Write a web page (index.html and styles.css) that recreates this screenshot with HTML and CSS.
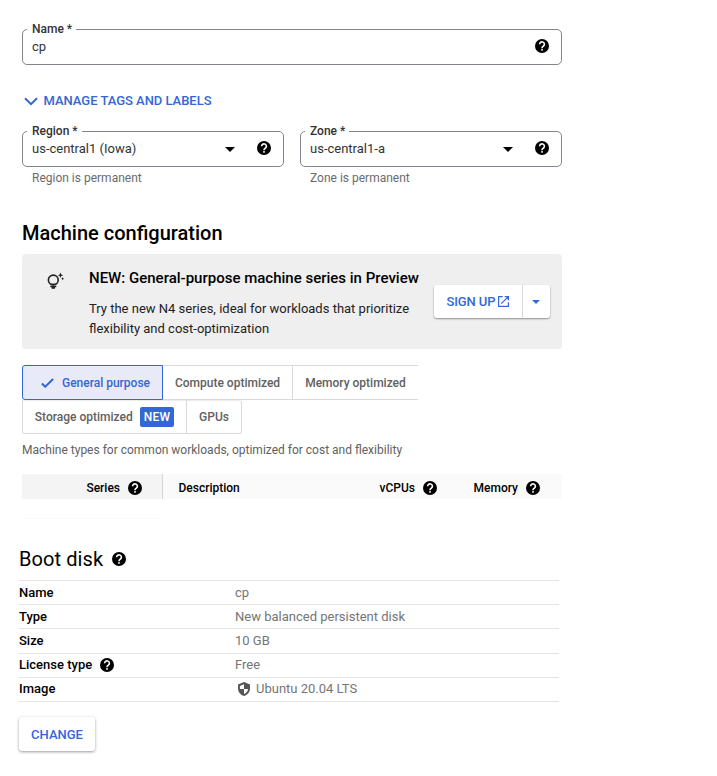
FILE: index.html
```html
<!DOCTYPE html>
<html lang="en">
<head>
<meta charset="utf-8">
<title>Create an instance</title>
<link rel="stylesheet" href="styles.css">
</head>
<body>
<svg class="defs" aria-hidden="true">
  <symbol id="help" viewBox="0 0 14 14">
    <circle cx="7" cy="7" r="7" fill="#000"/>
    <path d="M4.600 5.300a2.400 2.400 0 1 1 3.800 1.900C7.500 7.900 7 8.100 7 9.200" fill="none" stroke="#fff" stroke-width="1.600"/>
    <rect x="6.200" y="10.100" width="1.600" height="1.600" fill="#fff"/>
  </symbol>
</svg>
<main class="page">
  <div class="field">
    <span class="field-label">Name *</span>
    <span class="field-value">cp</span>
    <svg class="help"><use href="#help"/></svg>
  </div>

  <a class="expander">
    <svg class="chevron" viewBox="0 0 14 9"><path d="M1 1.200l6 6 6-6" fill="none" stroke="#3367d6" stroke-width="2"/></svg>
    <span>MANAGE TAGS AND LABELS</span>
  </a>

  <div class="location">
    <div class="location-col">
      <div class="field">
        <span class="field-label">Region *</span>
        <span class="field-value">us-central1 (Iowa)</span>
        <span class="caret"></span>
        <svg class="help"><use href="#help"/></svg>
      </div>
      <p class="hint">Region is permanent</p>
    </div>
    <div class="location-col">
      <div class="field">
        <span class="field-label">Zone *</span>
        <span class="field-value">us-central1-a</span>
        <span class="caret"></span>
        <svg class="help"><use href="#help"/></svg>
      </div>
      <p class="hint">Zone is permanent</p>
    </div>
  </div>

  <h2 class="section-title">Machine configuration</h2>

  <section class="banner">
    <svg class="bulb" viewBox="0 0 18 18">
      <circle cx="6.300" cy="8" r="4.900" fill="none" stroke="#222" stroke-width="1.600"/>
      <path d="M3.300 11.600h6v1.700h-6z" fill="#222"/>
      <path d="M3.300 14h6v1.300H8v1.500H4.600v-1.500H3.300z" fill="#222"/>
      <path d="M13.500.5l.8 1.900 1.900.8-1.900.8-.8 1.900-.8-1.900-1.900-.8 1.900-.8z" fill="#222"/>
      <path d="M15.700 5.200l.5 1 1 .5-1 .5-.5 1-.5-1-1-.5 1-.5z" fill="#222"/>
    </svg>
    <div class="banner-body">
      <h3 class="banner-title">NEW: General-purpose machine series in Preview</h3>
      <p class="banner-text">Try the new N4 series, ideal for workloads that prioritize<br>flexibility and cost-optimization</p>
    </div>
    <div class="split-button">
      <span class="split-main">SIGN UP
        <svg class="launch" viewBox="0 0 11 11"><path d="M4.700.6H.6v9.800h9.800V6.200M6.700.6h3.700v3.700M10.200.8L3.300 7.700" fill="none" stroke="#3367d6" stroke-width="1.200"/></svg>
      </span>
      <span class="split-arrow"><span class="caret caret-blue"></span></span>
    </div>
  </section>

  <div class="tabs">
    <div class="tab-row tab-row-first">
      <span class="tab tab-active">
        <svg class="check" viewBox="0 0 12 9"><path d="M.8 4.900l3.100 3L11.200.8" fill="none" stroke="#3367d6" stroke-width="1.900"/></svg>
        <span>General purpose</span>
      </span>
      <span class="tab tab-compute">Compute optimized</span>
      <span class="tab tab-memory">Memory optimized</span>
    </div>
    <div class="tab-row tab-row-second">
      <span class="tab tab-storage">Storage optimized <b class="badge">NEW</b></span>
      <span class="tab tab-gpu">GPUs</span>
    </div>
  </div>
  <p class="note">Machine types for common workloads, optimized for cost and flexibility</p>

  <div class="series-head">
    <span class="col col-series"><span>Series</span><svg class="help"><use href="#help"/></svg></span>
    <span class="col col-desc">Description</span>
    <span class="col col-cpu"><span>vCPUs</span><svg class="help"><use href="#help"/></svg></span>
    <span class="col col-mem"><span>Memory</span><svg class="help"><use href="#help"/></svg></span>
  </div>
  <div class="series-edge"></div>

  <section class="boot">
    <h2 class="boot-title"><span>Boot disk</span><svg class="help"><use href="#help"/></svg></h2>
    <dl class="details">
      <div class="row"><dt>Name</dt><dd>cp</dd></div>
      <div class="row"><dt>Type</dt><dd>New balanced persistent disk</dd></div>
      <div class="row"><dt>Size</dt><dd>10 GB</dd></div>
      <div class="row"><dt>License type<svg class="help"><use href="#help"/></svg></dt><dd>Free</dd></div>
      <div class="row"><dt>Image</dt><dd>
        <svg class="shield" viewBox="0 0 12 14"><path d="M6 0L0 2.400v4C0 9.800 2.500 12.900 6 14c3.500-1.100 6-4.200 6-7.600v-4z" fill="#555"/><path d="M6 2.300V7H1.900V3.900zM6 7h4.100C9.800 9.300 8.300 11.200 6 12z" fill="#fff"/></svg>Ubuntu 20.04 LTS</dd></div>
    </dl>
    <button class="change">CHANGE</button>
  </section>
</main>
</body>
</html>
```
FILE: styles.css
```css
* { box-sizing: border-box; }
body {
  margin: 0;
  background: #fff;
  color: #000;
  font: 13px/20px Roboto, "Liberation Sans", sans-serif;
}
h2, h3, p, dl, dd { margin: 0; }
svg { flex: none; display: block; }
.defs { position: absolute; width: 0; height: 0; }
.page { width: 540px; margin-left: 22px; padding: 29px 0 20px; }
.help { width: 14px; height: 14px; }

.field {
  position: relative;
  display: flex;
  align-items: center;
  height: 36px;
  padding: 0 12px 2px 9px;
  border: 1px solid #80868b;
  border-radius: 5px;
}
.field-label {
  position: absolute;
  top: -9px;
  left: 4px;
  padding: 0 4px 0 5px;
  background: #fff;
  color: #333;
  font-size: 12px;
  font-weight: 500;
  line-height: 16px;
}
.field-value { flex: 1; padding-top: 2px; color: #333; }
.caret {
  width: 0;
  height: 0;
  margin-right: 22px;
  border: 5px solid transparent;
  border-top-color: #000;
  border-bottom: 0;
}
.field .caret { margin-top: 2px; }
.expander {
  display: flex;
  align-items: center;
  gap: 5.5px;
  height: 20px;
  margin-top: 26px;
  padding-left: 2px;
  color: #3367d6;
  font-weight: 500;
  letter-spacing: -.03px;
}
.chevron { width: 14px; height: 9px; }
.location { display: flex; gap: 16px; margin-top: 20px; }
.location-col { width: 262px; }
.hint {
  padding: 3px 0 0 10px;
  line-height: 16px;
  color: #6b6b6b;
  font-size: 12px;
}

.section-title { padding-top: 35px; font-size: 20px; font-weight: 500; line-height: 24px; }
.banner {
  display: flex;
  height: 95px;
  margin-top: 9px;
  padding-right: 12.5px;
  border-radius: 4px;
  background: #efefef;
}
.bulb { width: 18px; height: 18px; margin: 18px 24px 0 25px; }
.banner-body { flex: 1; padding-top: 14px; white-space: nowrap; }
.banner-title { font-size: 15px; font-weight: 500; line-height: 20px; }
.banner-text { margin-top: 11px; color: #222; }
.split-button {
  display: flex;
  height: 33px;
  margin-top: 31px;
  border-radius: 3px;
  background: #fff;
  box-shadow: 0 1px 2px rgba(0,0,0,.4);
  color: #3367d6;
  font-weight: 500;
}
.split-main { display: flex; align-items: center; gap: 3px; width: 89px; padding-left: 13px; white-space: nowrap; letter-spacing: -.1px; border-right: 1px solid #dadada; }
.launch { width: 11px; height: 11px; }
.split-arrow { display: flex; align-items: center; justify-content: center; width: 27px; }
.caret-blue { margin: 0; border-width: 4px; border-top-color: #3367d6; border-bottom: 0; }

.tabs { margin-top: 16px; color: #616161; font-size: 12px; font-weight: 500; }
.tab-row { display: flex; height: 34px; }
.tab-row-first { height: 35px; width: 396px; }
.tab { display: flex; align-items: center; justify-content: center; border: 1px solid #dadada; border-left: 0; white-space: nowrap; }
.tab-active { gap: 8px; width: 141px; padding-left: 6px; border: 1px solid #3367d6; border-radius: 3px 0 0 3px; background: #e9eaf8; color: #3367d6; }
.check { width: 13px; height: 10px; }
.tab-compute { width: 130px; }
.tab-memory { width: 125px; border-right: 0; }
.tab-storage { gap: 7px; width: 165px; border-left: 1px solid #dadada; border-top-color: #ececec; border-radius: 0 0 0 3px; }
.tab-gpu { width: 55px; border-top-color: #ececec; border-radius: 0 3px 3px 0; }
.badge { height: 20px; padding: 0 4px; border-radius: 2px; background: #3367d6; color: #fff; font-weight: 500; letter-spacing: .2px; }
.note { margin-top: 6px; color: #616161; font-size: 12px; }

.series-head { display: flex; height: 25px; margin-top: 14px; background: #fafafa; font-size: 12px; font-weight: 500; }
.col { display: flex; align-items: center; gap: 8px; padding-top: 2px; }
.col-series { justify-content: flex-end; width: 141px; padding-right: 20px; border-right: 1px solid #d6d6d6; background: #f4f4f4; }
.col-desc { width: 160px; padding-left: 15.5px; }
.col-cpu { justify-content: flex-end; width: 114px; }
.col-mem { justify-content: flex-end; width: 103px; }
.series-edge { width: 141px; height: 1px; margin-top: 19px; background: #fafafa; }

.boot { width: 540px; margin: 28px 0 0 -3px; }
.boot-title { display: flex; align-items: center; gap: 9px; height: 24px; font-size: 20px; font-weight: 400; letter-spacing: .08px; }
.boot-title .help { margin-top: -1px; }
.details { margin-top: 9px; border-top: 1px solid #e4e4e4; }
.row { display: flex; height: 24.2px; border-bottom: 1px solid #e4e4e4; line-height: 24px; }
.row dt { display: flex; align-items: center; gap: 8px; width: 216px; font-weight: 500; }
.row dd { display: flex; align-items: center; color: #757575; }
.shield { width: 12px; height: 14px; margin: 0 6px 0 3px; }
.change {
  display: block;
  width: 76px;
  height: 34px;
  margin-top: 15px;
  padding: 1px 0 0;
  border: 0;
  border-radius: 3px;
  background: #fff;
  box-shadow: 0 1px 3px rgba(0,0,0,.4);
  color: #3367d6;
  font: 500 13px Roboto, sans-serif;
}
```
